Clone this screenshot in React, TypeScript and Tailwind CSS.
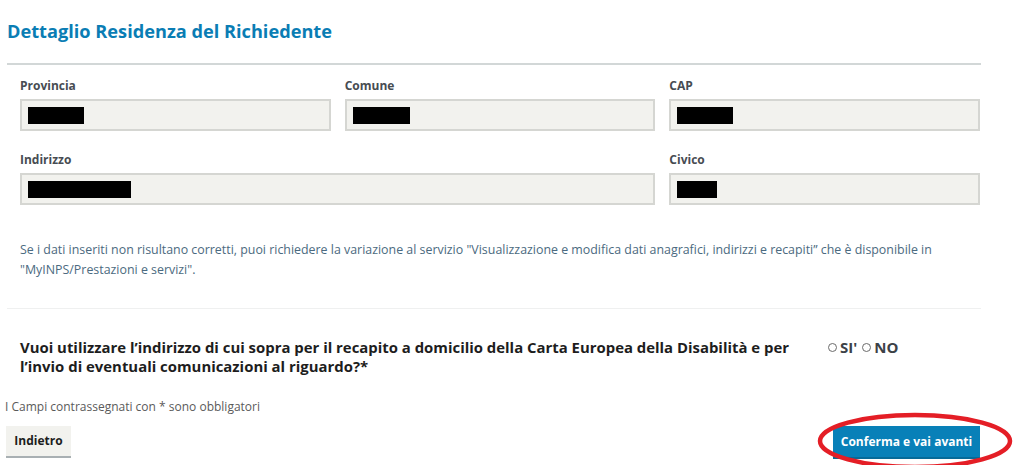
const font = { fontFamily: '"Open Sans", sans-serif' };

function Field({ label, redact, className = '' }: { label: string; redact: number; className?: string }) {
  return (
    <div className={className}>
      <div className="h-[18px] text-[12px] leading-[18px] font-bold text-[#474c52]">{label}</div>
      <div className="mt-[4px] h-[32px] bg-[#f2f2ee] border-2 border-[#d5d6d2] flex items-center pl-[6px]">
        <div className="h-[17px] bg-black" style={{ width: redact }} />
      </div>
    </div>
  );
}

export default function App() {
  return (
    <div className="relative w-[1024px] h-[465px] overflow-hidden bg-white" style={font}>
      <div className="ml-[7px] w-[974px]">
        <h1 className="pt-[18px] text-[18.2px] leading-[26px] font-bold text-[#0a7db4]">
          Dettaglio Residenza del Richiedente
        </h1>
        <div className="mt-[19px] border-t-2 border-[#d2d7d7]" />

        <div className="ml-[13px] w-[960px] pt-[12px] grid grid-cols-3 gap-x-[14px] gap-y-[20px]">
          <Field label="Provincia" redact={56} />
          <Field label="Comune" redact={57} />
          <Field label="CAP" redact={56} />
          <Field label="Indirizzo" redact={103} className="col-span-2" />
          <Field label="Civico" redact={40} />
        </div>

        <p className="ml-[13px] mt-[35px] text-[12.4px] leading-[20px] text-[#4b6a80]">
          Se i dati inseriti non risultano corretti, puoi richiedere la variazione al servizio "Visualizzazione e modifica dati anagrafici, indirizzi e recapiti” che è disponibile in
          <br />
          "MyINPS/Prestazioni e servizi".
        </p>

        <div className="mt-[28px] border-t border-[#eff0f0]" />

        <div className="mt-[29px] ml-[13px] flex">
          <p className="w-[808px] text-[14.9px] leading-[19px] font-bold text-[#1d1d1d]">
            Vuoi utilizzare l’indirizzo di cui sopra per il recapito a domicilio della Carta Europea della Disabilità e per
            <br />
            l’invio di eventuali comunicazioni al riguardo?*
          </p>
          <div className="flex items-center h-[19px] text-[15px] font-bold text-[#3c4147]">
            <span className="w-[9px] h-[9px] rounded-full border border-[#6b6b6b] mr-[3px]" />
            <span>SI'</span>
            <span className="w-[9px] h-[9px] rounded-full border border-[#6b6b6b] ml-[5px] mr-[3px]" />
            <span>NO</span>
          </div>
        </div>
      </div>

      <div className="ml-[5px] mt-[22px] text-[12px] leading-[18px] text-[#5a5a5a]">
        I Campi contrassegnati con * sono obbligatori
      </div>

      <div className="mt-[10px] flex justify-between items-start">
        <button className="ml-[6px] w-[65px] h-[32px] bg-[#f2f2ee] border-b-2 border-[#a9b0b3] text-[12px] font-bold text-[#1d1d1d]">
          Indietro
        </button>
        <button className="mr-[44px] w-[147px] h-[33px] bg-[#0880b8] border-b-2 border-[#066a98] text-[12px] font-bold text-white">
          Conferma e vai avanti
        </button>
      </div>

      <svg className="absolute left-[815px] top-[410px] pointer-events-none" width="200" height="62" viewBox="0 0 200 62">
        <ellipse cx="100" cy="31" rx="95" ry="26" fill="none" stroke="#e41e26" strokeWidth="4.5" />
      </svg>
    </div>
  );
}
